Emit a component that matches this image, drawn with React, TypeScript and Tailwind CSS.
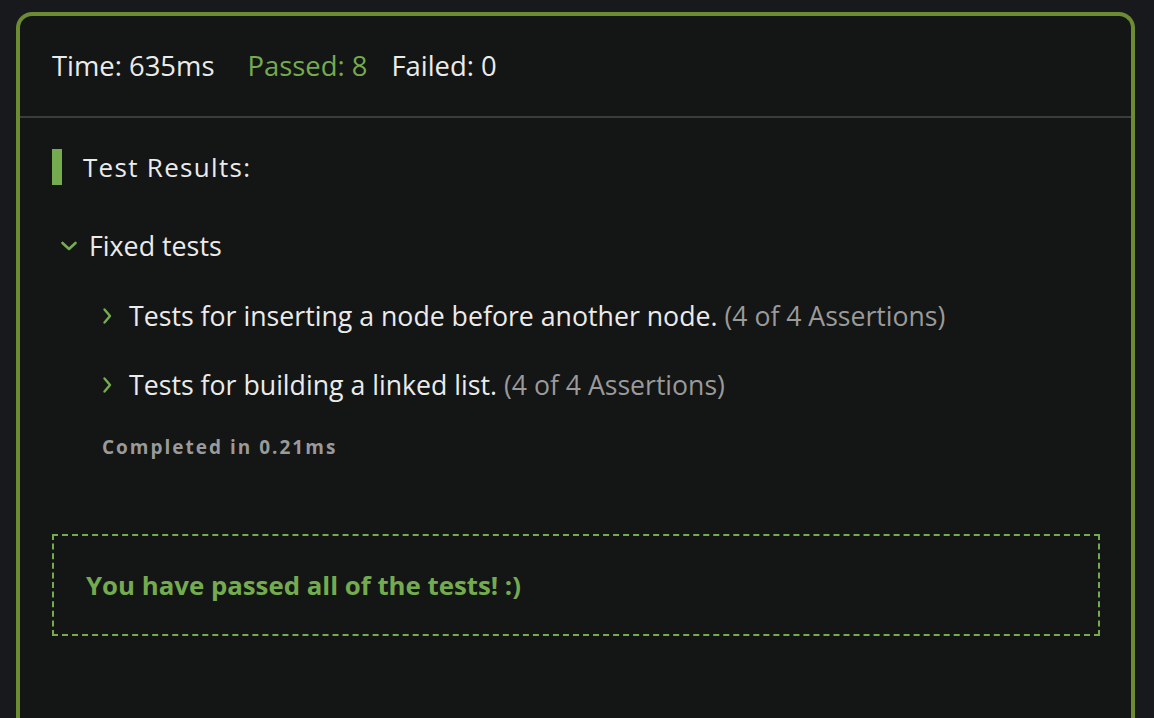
import React from "react";

const FONT = { fontFamily: '"Open Sans", "Noto Sans", sans-serif' };

const ChevronDown = () => (
  <svg width="18" height="12" viewBox="0 0 18 12" className="shrink-0">
    <path d="M2.5 3 L9 9 L15.5 3" fill="none" stroke="#76ad4f" strokeWidth="2.6" strokeLinecap="round" strokeLinejoin="round" />
  </svg>
);

const ChevronRight = () => (
  <svg width="10" height="18" viewBox="0 0 10 18" className="shrink-0">
    <path d="M2.5 2.5 L8 9 L2.5 15.5" fill="none" stroke="#76ad4f" strokeWidth="2.4" strokeLinecap="round" strokeLinejoin="round" />
  </svg>
);

const tests = [
  { name: "Tests for inserting a node before another node.", count: "(4 of 4 Assertions)" },
  { name: "Tests for building a linked list.", count: "(4 of 4 Assertions)" },
];

export default function App() {
  return (
    <div className="min-h-[718px] bg-[#18191c] pl-4 pr-[19px] pt-3 overflow-hidden" style={FONT}>
      <div className="h-[720px] rounded-t-2xl border-4 border-b-0 border-[#6b8c33] bg-[#141515]">
        {/* summary */}
        <div className="flex h-[102px] items-center border-b-2 border-[#3b3c3c] pl-8 text-[27.4px] leading-[36px] text-[#ebebeb]">
          <span>Time: 635ms</span>
          <span className="ml-[33px] text-[#74ab4f]">Passed: 8</span>
          <span className="ml-[24px]">Failed: 0</span>
        </div>

        <div className="pl-8 pr-[31px] pt-[31px]">
          <div className="flex items-center gap-[21px]">
            <div className="h-9 w-[10px] bg-[#74ab4f]" />
            <span className="text-[26px] leading-[36px] tracking-[1.3px] text-[#ebebeb]">Test Results:</span>
          </div>

          <div className="mt-[43px] flex items-center gap-[11px] pl-2 text-[26.8px] leading-[36px] text-[#ebebeb]">
            <ChevronDown />
            <span>Fixed tests</span>
          </div>

          <div className="mt-[34px] flex flex-col gap-[33px] pl-[50px]">
            {tests.map((t) => (
              <div key={t.name} className="flex items-center gap-[17px]">
                <ChevronRight />
                <span className="text-[26.7px] leading-[36px] text-[#ebebeb]">
                  {t.name}{" "}
                  <span className="text-[26.6px] text-[#9a9a9a]">{t.count}</span>
                </span>
              </div>
            ))}
          </div>

          <div className="mt-[32px] pl-[50px] text-[19px] font-bold leading-[24px] tracking-[2px] text-[#9a9a9a]">
            Completed in 0.21ms
          </div>

          <div className="mt-[75px] flex h-[102px] items-center border-2 border-dashed border-[#74ab4f] pl-8 text-[25.8px] font-bold leading-[34px] text-[#74ab4f]">
            You have passed all of the tests! :)
          </div>
        </div>
      </div>
    </div>
  );
}
